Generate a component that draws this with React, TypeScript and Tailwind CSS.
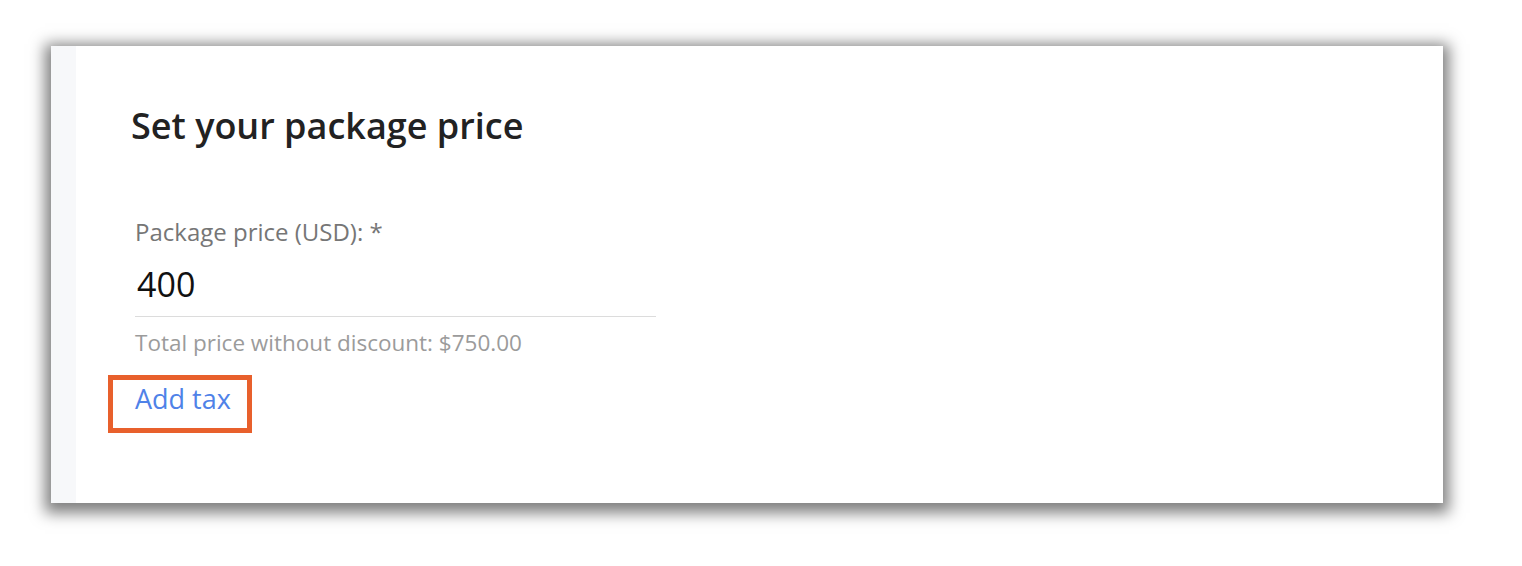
export default function App() {
  return (
    <div className="min-h-[566px] w-[1522px] bg-white pl-[51px] pt-[46px] font-['Open_Sans',sans-serif]">
      <div className="flex h-[457px] w-[1392px] bg-white shadow-[0_4px_14px_6px_rgba(0,0,0,0.5)]">
        {/* left rail */}
        <div className="w-[25px] shrink-0 bg-[#f7f8fa]" />

        <div className="flex flex-col pl-[55px] pt-[58px]">
          <h1 className="text-[36px] font-semibold leading-[44px] text-[#222]">Set your package price</h1>

          <div className="ml-[4px] mt-[70px] flex w-[521px] flex-col">
            <label className="text-[24px] leading-[28px] text-[#767676]">Package price (USD): *</label>
            <div className="border-b-[1.5px] border-[#dcdcdc] pb-[12px] pt-[18px] pl-[2px] text-[34px] leading-[40px] text-[#111]">
              400
            </div>
            <p className="mt-[12px] text-[22.5px] leading-[28px] text-[#9b9b9b]">
              Total price without discount: $750.00
            </p>
          </div>

          <div className="ml-[4px] mt-[26px]">
            <a className="relative inline-block text-[27px] leading-[32px] text-[#4f82e8]">
              Add tax
              {/* highlight annotation */}
              <span className="absolute -bottom-[18px] -left-[27px] -right-[21px] -top-[8px] border-[5px] border-[#e8602c]" />
            </a>
          </div>
        </div>
      </div>
    </div>
  )
}
